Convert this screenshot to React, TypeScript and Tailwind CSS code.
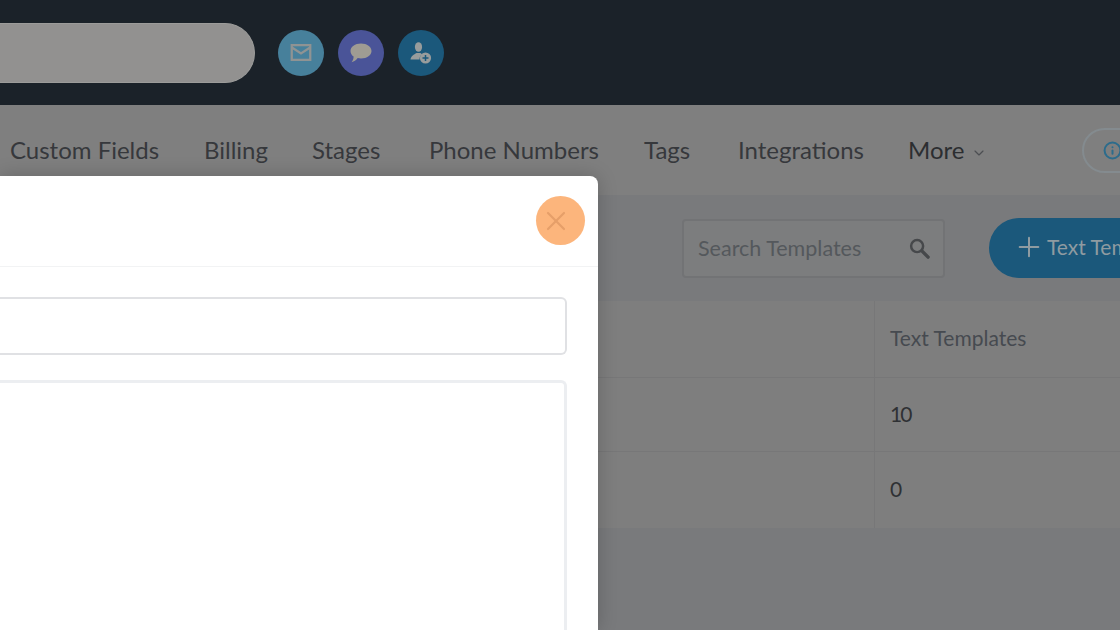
import { ChevronDown, Info, Plus, X } from "lucide-react";

const NAV: { label: string; width: string }[] = [
  { label: "Custom Fields", width: "w-[149px]" },
  { label: "Billing", width: "w-[63px]" },
  { label: "Stages", width: "w-[72px]" },
  { label: "Phone Numbers", width: "w-[170px]" },
  { label: "Tags", width: "w-[49px]" },
  { label: "Integrations", width: "w-[125px]" },
];

function MailIcon() {
  return (
    <svg viewBox="0 0 22 18" className="h-[17px] w-[22px]" fill="none" stroke="#8f9393" strokeWidth="2.4">
      <rect x="1.2" y="1.2" width="19.6" height="15.6" />
      <path d="M1 3.5 L11 10 L21 3.5" />
    </svg>
  );
}

function ChatIcon() {
  return (
    <svg viewBox="0 0 22 20" className="h-[20px] w-[22px]" fill="#9f9c93">
      <path d="M11 0.5 C17 0.5 21.5 3.8 21.5 8 C21.5 12.2 17 15.5 11 15.5 C9.8 15.5 8.7 15.4 7.7 15.1 C6.2 17 4 18.8 1.6 19.3 C3 17.6 3.6 15.6 3.6 13.6 C1.6 12.2 0.5 10.2 0.5 8 C0.5 3.8 5 0.5 11 0.5 Z" />
    </svg>
  );
}

function AddUserIcon() {
  return (
    <svg viewBox="0 0 24 24" className="h-[24px] w-[24px]">
      <ellipse cx="9.5" cy="6" rx="3.6" ry="4.8" fill="#989c9c" />
      <path d="M1.5 18.5 C2 15 5 13.5 7.5 12 L11.5 12 C12 12.6 12.6 13 13.2 13.3 C11.3 14.6 10.4 16.5 10.6 18.5 Z" fill="#989c9c" />
      <circle cx="16.5" cy="17" r="5.6" fill="#989c9c" />
      <path d="M16.5 14 V20 M13.5 17 H19.5" stroke="#1b587b" strokeWidth="1.5" />
    </svg>
  );
}

function SearchGlyph() {
  return (
    <svg viewBox="0 0 22 22" className="h-[21px] w-[21px]" fill="none" stroke="#46484b">
      <circle cx="8.5" cy="8.5" r="6.3" strokeWidth="2.6" />
      <path d="M13.5 13.5 L20 20" strokeWidth="3.6" strokeLinecap="round" />
    </svg>
  );
}

export default function App() {
  return (
    <div className="relative flex h-[630px] w-[1120px] flex-col overflow-hidden bg-[#797a7c] font-['Lato',sans-serif]">
      <header className="flex h-[105px] shrink-0 items-center gap-[14px] bg-[#1b2229]">
        <div className="mr-[9px] h-[60px] w-[255px] rounded-r-[30px] border-y border-r border-[#9c9c9a] bg-[#929190]" />
        <div className="flex h-[46px] w-[46px] items-center justify-center rounded-full bg-[#47809b]">
          <MailIcon />
        </div>
        <div className="flex h-[46px] w-[46px] items-center justify-center rounded-full bg-[#4a5498]">
          <ChatIcon />
        </div>
        <div className="flex h-[46px] w-[46px] items-center justify-center rounded-full bg-[#1b587b]">
          <AddUserIcon />
        </div>
      </header>

      <nav className="flex h-[90px] shrink-0 items-center gap-[45px] overflow-hidden bg-[#7f7f7f] pl-[10px] text-[24px] text-[#36383c]">
        {NAV.map((item) => (
          <span key={item.label} className={`${item.width} shrink-0 whitespace-nowrap`}>
            {item.label}
          </span>
        ))}
        <span className="flex w-[129px] shrink-0 items-center gap-[7px] whitespace-nowrap text-[#2c2e31]">
          More
          <ChevronDown className="mt-[5px] h-[16px] w-[16px] text-[#4c4e52]" strokeWidth={1.75} />
        </span>
        <div className="flex h-[45px] w-[120px] shrink-0 items-center rounded-full border-2 border-[#848b8f] bg-[#7f7f7f] pl-[19px]">
          <Info className="h-[19px] w-[19px] text-[#2c6c8c]" strokeWidth={2.5} />
        </div>
      </nav>

      <section className="flex h-[106px] shrink-0 items-center gap-[44px] overflow-hidden pl-[682px]">
        <div className="flex h-[59px] w-[263px] shrink-0 items-center justify-between rounded-[4px] border-2 border-[#727375] bg-[#7c7d7e] pl-[14px] pr-[13px] text-[21.5px] text-[#54585c]">
          <span className="whitespace-nowrap">Search Templates</span>
          <SearchGlyph />
        </div>
        <div className="flex h-[60px] w-[240px] shrink-0 items-center gap-[2px] rounded-full bg-[#1b587b] pb-[3px] pl-[24px] text-[21px] text-[#8f9ba1]">
          <Plus className="h-[32px] w-[32px]" strokeWidth={1.5} />
          <span className="whitespace-nowrap">Text Templates</span>
        </div>
      </section>

      <section className="grid shrink-0 grid-cols-[875px_1fr] bg-[#7e7e7e] text-[#2f3134]">
        <div className="h-[77px] border-r border-b border-[#777778]" />
        <div className="flex h-[77px] items-center border-b border-[#777778] pb-[3px] pl-[15px] text-[21px] text-[#464a50]">
          Text Templates
        </div>
        <div className="h-[74px] border-r border-b border-[#777778]" />
        <div className="flex h-[74px] items-center border-b border-[#777778] pb-[2px] pl-[15px] text-[21px] tracking-[-2px]">10</div>
        <div className="h-[76px] border-r border-[#777778]" />
        <div className="flex h-[76px] items-center pb-[3px] pl-[15px] text-[21px]">0</div>
      </section>

      {/* modal over the dimmed page */}
      <div className="absolute top-[176px] bottom-0 left-0 w-[598px] rounded-tr-[8px] bg-white shadow-[0_0_20px_rgba(0,0,0,0.2)]">
        <div className="h-[91px] border-b border-[#f2f3f4]" />
        <div className="flex flex-col gap-[25px] pt-[30px] pr-[31px]">
          <div className="h-[58px] rounded-r-[6px] border-2 border-l-0 border-[#e0e1e4]" />
          <div className="h-[300px] rounded-tr-[6px] border-t-[3px] border-r-[3px] border-[#eceef1]" />
        </div>
        <button className="absolute top-[20px] right-[13px] flex h-[49px] w-[49px] items-center justify-center rounded-full bg-[#fcb57c] pr-[9px]">
          <X className="h-[32px] w-[32px] shrink-0 text-[#e69f69]" strokeWidth={1.6} />
        </button>
      </div>
    </div>
  );
}
